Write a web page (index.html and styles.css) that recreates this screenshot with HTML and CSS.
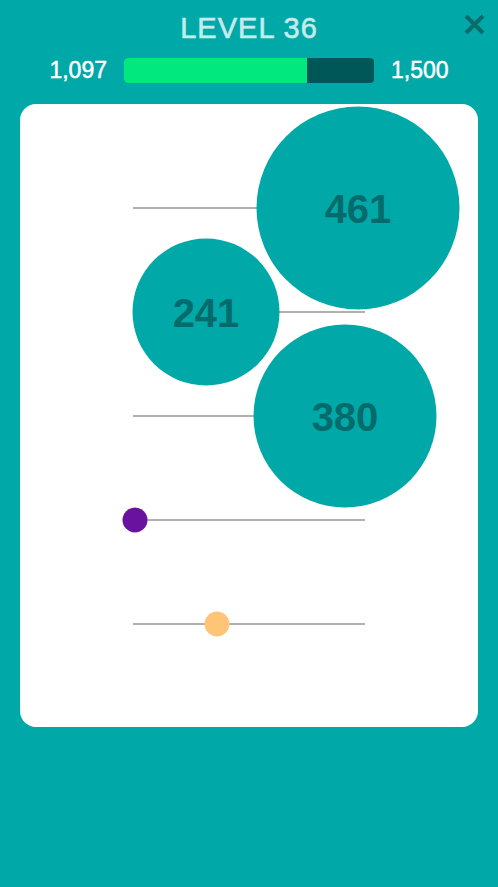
FILE: index.html
```html
<!DOCTYPE html>
<html lang="en">
<head>
    <meta charset="UTF-8">
    <meta name="viewport" content="width=device-width, initial-scale=1.0">
    <title>Level 36</title>
    <link rel="stylesheet" href="styles.css">
</head>
<body>

<header class="header">
    <h1 class="title">LEVEL 36</h1>
    <button class="close" aria-label="Close">
        <svg width="21" height="21" viewBox="0 0 21 21">
            <path d="M2 2 L19 19 M19 2 L2 19" stroke="#0b6b6b" stroke-width="4" fill="none"/>
        </svg>
    </button>
    <div class="progress">
        <span class="score">1,097</span>
        <div class="bar"><div class="fill" style="width: 73.1%"></div></div>
        <span class="score">1,500</span>
    </div>
</header>

<main class="card">
    <div class="row">
        <div class="bubble" style="left: 225px; width: 203px; height: 203px;">461</div>
    </div>
    <div class="row">
        <div class="bubble" style="left: 73px; width: 147px; height: 147px;">241</div>
    </div>
    <div class="row">
        <div class="bubble" style="left: 212px; width: 183px; height: 183px;">380</div>
    </div>
    <div class="row">
        <div class="dot purple" style="left: 2px;"></div>
    </div>
    <div class="row">
        <div class="dot orange" style="left: 84px;"></div>
    </div>
</main>

</body>
</html>
```

FILE: styles.css
```css
body {
    margin: 0;
    height: 887px;
    background: #00a8a8;
    font-family: "Liberation Sans", Arial, sans-serif;
    overflow: hidden;
}

.header {
    position: relative;
    padding-top: 11px;
}

.title {
    margin: 0;
    text-align: center;
    font-size: 29px;
    line-height: 34px;
    font-weight: normal;
    letter-spacing: 1px;
    -webkit-text-stroke: 0.6px #c4ecec;
    color: #c4ecec;
}

.close {
    position: absolute;
    top: 14px;
    right: 13px;
    width: 21px;
    height: 21px;
    padding: 0;
    border: none;
    background: none;
    cursor: pointer;
}

.close svg {
    display: block;
}

.progress {
    display: flex;
    justify-content: center;
    align-items: center;
    gap: 17px;
    margin-top: 13px;
}

.score {
    color: #fff;
    font-size: 23px;
    line-height: 25px;
    -webkit-text-stroke: 0.5px #fff;
}

.bar {
    width: 250px;
    height: 25px;
    border-radius: 4px;
    background: #005757;
    overflow: hidden;
}

.fill {
    height: 100%;
    background: #00e87e;
}

.card {
    box-sizing: border-box;
    height: 623px;
    margin: 21px 20px 0;
    padding: 52px 0 51px;
    background: #fff;
    border-radius: 16px;
}

.row {
    position: relative;
    width: 232px;
    height: 104px;
    margin: 0 auto;
}

.row::before {
    content: "";
    position: absolute;
    top: 51px;
    left: 0;
    right: 0;
    height: 2px;
    background: #b0b0b0;
}

.bubble,
.dot {
    position: absolute;
    top: 52px;
    z-index: 1;
    border-radius: 50%;
    transform: translate(-50%, -50%);
}

.bubble {
    display: flex;
    align-items: center;
    justify-content: center;
    background: #00a8a8;
    color: #036b6b;
    font-size: 40px;
    font-weight: bold;
    line-height: 1;
}

.dot {
    width: 25px;
    height: 25px;
}

.purple {
    background: #6a12a0;
}

.orange {
    background: #ffc577;
}
```
